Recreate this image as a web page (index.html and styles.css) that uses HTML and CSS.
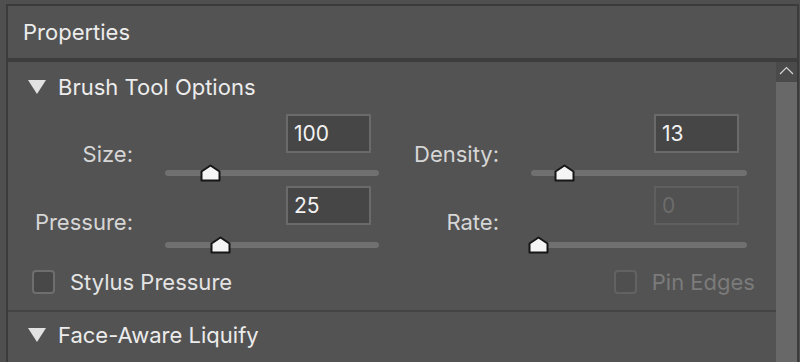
FILE: index.html
```html
<!DOCTYPE html>
<html lang="en">
<head>
  <meta charset="UTF-8" />
  <title>Properties</title>
  <link rel="stylesheet" href="styles.css">
</head>
<body>
  <div class="panel">
    <div class="panel-title">Properties</div>

    <div class="panel-main">
      <div class="content">
        <div class="section">
          <div class="section-head">
            <svg class="twisty" width="18" height="14" viewBox="0 0 18 14"><polygon points="0,0 18,0 9,14" /></svg>
            <span>Brush Tool Options</span>
          </div>

          <div class="fields">
            <label class="lbl lbl-top">Size:</label>
            <div class="ctrl">
              <input class="num" type="text" value="100">
              <div class="slider">
                <div class="track"></div>
                <svg class="thumb" style="left:35px" width="21" height="18" viewBox="0 0 21 18"><polygon points="1.5,7.5 10.5,1.5 19.5,7.5 19.5,16.5 1.5,16.5" /></svg>
              </div>
            </div>
            <label class="lbl lbl-top">Density:</label>
            <div class="ctrl">
              <input class="num" type="text" value="13">
              <div class="slider">
                <div class="track"></div>
                <svg class="thumb" style="left:23px" width="21" height="18" viewBox="0 0 21 18"><polygon points="1.5,7.5 10.5,1.5 19.5,7.5 19.5,16.5 1.5,16.5" /></svg>
              </div>
            </div>

            <label class="lbl">Pressure:</label>
            <div class="ctrl">
              <input class="num" type="text" value="25">
              <div class="slider">
                <div class="track"></div>
                <svg class="thumb" style="left:45px" width="21" height="18" viewBox="0 0 21 18"><polygon points="1.5,7.5 10.5,1.5 19.5,7.5 19.5,16.5 1.5,16.5" /></svg>
              </div>
            </div>
            <label class="lbl">Rate:</label>
            <div class="ctrl">
              <input class="num" type="text" value="0" disabled>
              <div class="slider">
                <div class="track"></div>
                <svg class="thumb" style="left:-3px" width="21" height="18" viewBox="0 0 21 18"><polygon points="1.5,7.5 10.5,1.5 19.5,7.5 19.5,16.5 1.5,16.5" /></svg>
              </div>
            </div>
          </div>

          <div class="checks">
            <div class="check"><span class="box"></span>Stylus Pressure</div>
            <div class="check off"><span class="box"></span>Pin Edges</div>
          </div>
        </div>

        <div class="section">
          <div class="section-head">
            <svg class="twisty" width="18" height="14" viewBox="0 0 18 14"><polygon points="0,0 18,0 9,14" /></svg>
            <span>Face-Aware Liquify</span>
          </div>
        </div>
      </div>

      <div class="scrollbar">
        <div class="scroll-up">
          <svg width="15" height="9" viewBox="0 0 15 9"><polyline points="1,8 7.5,1.5 14,8" /></svg>
        </div>
        <div class="scroll-thumb"></div>
      </div>
    </div>
  </div>
</body>
</html>
```

FILE: styles.css
```css
html, body {
  height: 100%;
}
body {
  margin: 0;
  background: #4f4f4f;
  font-family: Inter, "Noto Sans", sans-serif;
  font-size: 22px;
  color: #d8d8d8;
  overflow: hidden;
}
.panel {
  margin: 4px 1px 0 6px;
  height: 100%;
  border: 2px solid #3b3b3b;
  border-bottom: none;
  background: #535353;
  box-sizing: border-box;
  display: flex;
  flex-direction: column;
}
.panel-title {
  height: 52px;
  line-height: 52px;
  padding-left: 15px;
  color: #ececec;
  border-bottom: 4px solid #3d3d3d;
  flex-shrink: 0;
}
.panel-main {
  flex: 1;
  display: flex;
}
.content {
  flex: 1;
}
.section {
  border-bottom: 2px solid #444;
}
.section-head {
  display: flex;
  align-items: center;
  gap: 12px;
  padding: 13px 0 0 20px;
  line-height: 24px;
  color: #ececec;
}
.twisty polygon {
  fill: #e2e2e2;
}
.fields {
  display: grid;
  grid-template-columns: 125px 214px 88px 216px;
  column-gap: 32px;
  margin-top: 15px;
}
.lbl {
  text-align: right;
  line-height: 24px;
  padding-top: 24px;
  color: #d6d6d6;
}
.lbl-top {
  padding-top: 28px;
}
.ctrl {
  display: flex;
  flex-direction: column;
  align-items: flex-end;
}
.num {
  width: 85px;
  height: 39px;
  margin-right: 8px;
  box-sizing: border-box;
  border: 2px solid #6a6a6a;
  background: #464646;
  color: #f2f2f2;
  font-family: inherit;
  font-size: 21px;
  padding: 0 6px;
  outline: none;
}
.num:disabled {
  border-color: #5f5f5f;
  background: #515151;
  color: #6c6c6c;
}
.slider {
  position: relative;
  width: 100%;
  height: 33px;
}
.track {
  margin-top: 17px;
  height: 6px;
  border-radius: 3px;
  background: #707070;
}
.thumb {
  position: absolute;
  top: 11px;
}
.thumb polygon {
  fill: #f5f5f5;
  stroke: #161616;
  stroke-width: 2;
  stroke-linejoin: round;
}
.checks {
  display: flex;
  justify-content: space-between;
  padding: 12px 21px 16px 24px;
}
.check {
  display: flex;
  align-items: center;
  gap: 15px;
  line-height: 24px;
  color: #e4e4e4;
}
.check .box {
  width: 23px;
  height: 24px;
  box-sizing: border-box;
  border: 2px solid #6e6e6e;
  border-radius: 4px;
  background: #484848;
}
.check.off {
  color: #7b7b7b;
}
.check.off .box {
  border-color: #626262;
  background: #4f4f4f;
}
.section + .section {
  border-bottom: none;
}
.section + .section .section-head {
  padding-top: 11px;
}
.scrollbar {
  width: 21px;
  display: flex;
  flex-direction: column;
}
.scroll-up {
  height: 20px;
  background: #4a4a4a;
  display: flex;
  justify-content: center;
  padding-top: 4px;
  box-sizing: border-box;
}
.scroll-up polyline {
  fill: none;
  stroke: #d4d4d4;
  stroke-width: 1.2;
}
.scroll-thumb {
  flex: 1;
  background: #686868;
}
```
